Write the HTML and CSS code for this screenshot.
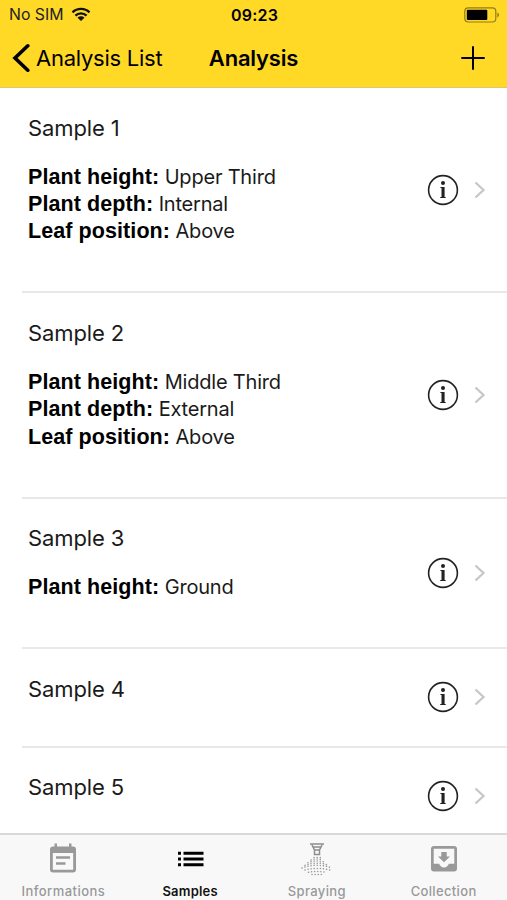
FILE: index.html
```
<!DOCTYPE html>
<html lang="en">
<head>
  <meta charset="UTF-8" />
  <meta name="viewport" content="width=device-width, initial-scale=1.0"/>
  <title>Analysis</title>
  <link rel="stylesheet" href="styles.css">
</head>
<body>

  <!-- Shared icons for the list rows -->
  <svg class="defs" width="0" height="0">
    <symbol id="info" viewBox="0 0 32 32">
      <circle cx="16" cy="16" r="14.4" fill="none" stroke="#222" stroke-width="1.6"/>
      <circle cx="16" cy="9.1" r="2" fill="#222"/>
      <path d="M13.400 12.900h4.200v10.100h1.100v1h-5.500v-1h1.300v-9h-1.100z" fill="#222"/>
    </symbol>
    <symbol id="chevron" viewBox="0 0 12 18">
      <path d="M1.5 1.5L9.5 9l-8 7.5" fill="none" stroke="#c7c7cb" stroke-width="2.3"/>
    </symbol>
  </svg>

  <header>
    <div class="status-bar">
      <div class="carrier">
        <span>No SIM</span>
        <svg width="20" height="15" viewBox="0 0 20 15">
          <path d="M1.5 5.4a12.2 12.2 0 0 1 17 0M4.4 8.6a8 8 0 0 1 11.2 0" fill="none" stroke="#111" stroke-width="2.3"/>
          <path d="M6.5 10.7a5 5 0 0 1 7 0L10 14z" fill="#111"/>
        </svg>
      </div>
      <span class="time">09:23</span>
      <svg class="battery" width="36" height="16" viewBox="0 0 36 16">
        <rect x=".8" y=".8" width="31" height="14.2" rx="3.5" fill="none" stroke="#947c18" stroke-width="1.2"/>
        <rect x="2.8" y="2.8" width="20.5" height="10.2" rx="1" fill="#000"/>
        <path d="M33.3 5.6c2.3.8 2.3 4 0 4.8z" fill="#947c18"/>
      </svg>
    </div>
    <nav class="nav-bar">
      <a class="back">
        <svg width="18" height="30" viewBox="0 0 18 30">
          <path d="M15.800 2.800L3 15l12.800 12.200" fill="none" stroke="#000" stroke-width="3.600" stroke-linecap="round"/>
        </svg>
        <span>Analysis List</span>
      </a>
      <h1>Analysis</h1>
      <svg class="add" width="24" height="24" viewBox="0 0 24 24">
        <path d="M12 .3v23.4M.3 12h23.4" stroke="#000" stroke-width="2"/>
      </svg>
    </nav>
  </header>

  <main>
    <div class="row full">
      <div class="text">
        <h2>Sample 1</h2>
        <p><b>Plant height:</b> <span>Upper Third</span></p>
        <p><b>Plant depth:</b> <span>Internal</span></p>
        <p><b>Leaf position:</b> <span>Above</span></p>
      </div>
      <svg class="info"><use href="#info"/></svg>
      <svg class="chevron"><use href="#chevron"/></svg>
    </div>
    <div class="row full">
      <div class="text">
        <h2>Sample 2</h2>
        <p><b>Plant height:</b> <span>Middle Third</span></p>
        <p><b>Plant depth:</b> <span>External</span></p>
        <p><b>Leaf position:</b> <span>Above</span></p>
      </div>
      <svg class="info"><use href="#info"/></svg>
      <svg class="chevron"><use href="#chevron"/></svg>
    </div>
    <div class="row short">
      <div class="text">
        <h2>Sample 3</h2>
        <p><b>Plant height:</b> <span>Ground</span></p>
      </div>
      <svg class="info"><use href="#info"/></svg>
      <svg class="chevron"><use href="#chevron"/></svg>
    </div>
    <div class="row">
      <div class="text">
        <h2>Sample 4</h2>
      </div>
      <svg class="info"><use href="#info"/></svg>
      <svg class="chevron"><use href="#chevron"/></svg>
    </div>
    <div class="row">
      <div class="text">
        <h2>Sample 5</h2>
      </div>
      <svg class="info"><use href="#info"/></svg>
      <svg class="chevron"><use href="#chevron"/></svg>
    </div>
  </main>

  <footer class="tabs">
    <a class="tab wide">
      <svg width="32" height="32" viewBox="0 0 32 32">
        <path d="M7.500 3.500V.500h2.500v3h12V.500h2.500v3h1.500c2 0 3 1.200 3 3v20c0 1.800-1 3-3 3H6c-2 0-3-1.200-3-3v-20c0-1.800 1-3 3-3zM5.800 10v16.700h20.400V10z" fill="#999" fill-rule="evenodd"/>
        <path d="M9 14.500h14M9 20.500h9.500" stroke="#999" stroke-width="2.400"/>
      </svg>
      <span>Informations</span>
    </a>
    <a class="tab active">
      <svg width="32" height="32" viewBox="0 0 32 32">
        <path d="M4 10.300h3M4 16h3M4 21.700h3M9.500 10.300h20M9.500 16h20M9.500 21.700h20" stroke="#000" stroke-width="3"/>
      </svg>
      <span>Samples</span>
    </a>
    <a class="tab">
      <svg width="34" height="34" viewBox="0 0 34 34">
        <path d="M10 2h14M12 3l2.500 5h5l2.500-5M14.500 8v4.500h5V8M12.500 5h9" fill="none" stroke="#8c8c8c" stroke-width="1.500"/>
        <!-- spray droplets -->
        <g fill="none" stroke="#999" stroke-width="1.500" stroke-linecap="round" stroke-dasharray=".1 3">
          <path d="M14 15.500h7"/>
          <path d="M11 18q6-2 12 0"/>
          <path d="M8 20.700q9-3.500 18 0"/>
          <path d="M5 23.400q12-4.500 24 0"/>
          <path d="M2 26q15-5.500 30 0"/>
          <path d="M5 28q12-3 25 0"/>
          <path d="M8.500 30.300q8.500-1.500 18 0"/>
          <path d="M12 32.500h11"/>
        </g>
      </svg>
      <span>Spraying</span>
    </a>
    <a class="tab">
      <svg width="32" height="32" viewBox="0 0 32 32">
        <path d="M6 3h20c2 0 3 1.200 3 3v19.500c0 1.800-1 3-3 3H6c-2 0-3-1.200-3-3V6c0-1.800 1-3 3-3zM5.700 5.800v15h5.500c.6 2 2.300 3.700 4.800 3.700s4.200-1.700 4.800-3.700h5.500v-15z" fill="#999" fill-rule="evenodd"/>
        <path d="M13.300 9h5.400v4.500h3.300l-6 5.800-6-5.800h3.300z" fill="#999"/>
      </svg>
      <span>Collection</span>
    </a>
  </footer>

</body>
</html>
```
FILE: styles.css
```
* {
  box-sizing: border-box;
}
body {
  margin: 0;
  height: 900px;
  display: flex;
  flex-direction: column;
  overflow: hidden;
  background: white;
  color: #000;
  font-family: Inter, "Liberation Sans", sans-serif;
}
.defs {
  display: none;
}
header {
  height: 88px;
  background: #ffd926;
  border-bottom: 1px solid #dcc873;
}
.status-bar {
  display: grid;
  grid-template-columns: 1fr auto 1fr;
  align-items: center;
  height: 29px;
  padding: 0 7px 0 9px;
}
.carrier {
  display: flex;
  align-items: center;
  gap: 8px;
  font-size: 15.8px;
  color: #222;
}
.time {
  font-size: 16px;
  font-weight: 600;
  letter-spacing: 0.2px;
}
.battery {
  justify-self: end;
}
.nav-bar {
  display: grid;
  grid-template-columns: 1fr auto 1fr;
  align-items: center;
  height: 57px;
  padding: 0 12px;
}
.back {
  display: flex;
  align-items: center;
  gap: 6px;
  font-size: 22px;
  letter-spacing: -0.25px;
}
h1 {
  margin: 0;
  font-size: 22px;
  font-weight: 600;
  letter-spacing: -0.2px;
}
.add {
  justify-self: end;
  margin-right: 10px;
}
main {
  flex: 1;
  min-height: 0;
  overflow: hidden;
}
.row {
  display: flex;
  align-items: center;
  height: 98.5px;
  margin-left: 22px;
  padding: 0 21px 0 6px;
  border-bottom: 2px solid #e8e8e8;
}
.row.full {
  height: 205.4px;
}
.row.short {
  height: 150.4px;
}
.text {
  flex: 1;
  align-self: flex-start;
  padding-top: 25.6px;
}
h2 {
  margin: 0 0 22px;
  font-size: 22px;
  line-height: 28px;
  font-weight: 400;
  letter-spacing: -0.1px;
  color: #1a1a1a;
}
p {
  margin: 0;
  font-size: 20px;
  line-height: 27.3px;
  letter-spacing: -0.2px;
  color: #1a1a1a;
}
p b {
  font-family: "Liberation Sans", sans-serif;
  font-size: 21.5px;
  letter-spacing: 0.08px;
  color: #000;
}
.info {
  width: 32px;
  height: 32px;
  margin-right: 15px;
}
.chevron {
  width: 12px;
  height: 18px;
}
.tabs {
  display: flex;
  height: 67px;
  background: #f8f8f8;
  border-top: 2px solid #d9d9d9;
}
.tab {
  flex: 1;
  display: flex;
  flex-direction: column;
  align-items: center;
  padding-top: 7px;
  font-size: 13px;
  font-weight: 500;
  line-height: 16px;
  letter-spacing: 0.35px;
  color: #999;
}
.tab svg {
  height: 34px;
  margin-bottom: 7px;
}
.tab.wide {
  letter-spacing: 0.45px;
}
.tab.active {
  font-weight: 600;
  letter-spacing: 0.2px;
  color: #111;
}
```
